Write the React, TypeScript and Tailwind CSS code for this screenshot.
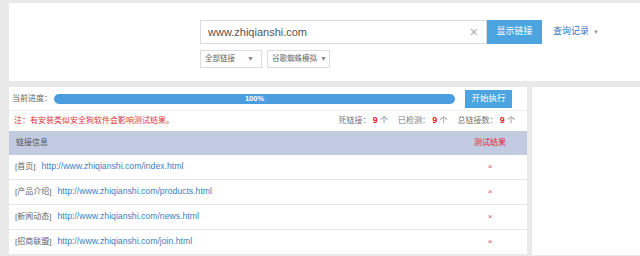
const font = { fontFamily: '"Liberation Sans", "Noto Sans CJK SC", sans-serif' };

const links = [
  { tag: "首页", url: "http://www.zhiqianshi.com/index.html" },
  { tag: "产品介绍", url: "http://www.zhiqianshi.com/products.html" },
  { tag: "新闻动态", url: "http://www.zhiqianshi.com/news.html" },
  { tag: "招商联盟", url: "http://www.zhiqianshi.com/join.html" },
];

function Caret() {
  return <span className="text-[7px] text-[#888]">▼</span>;
}

function SearchBar() {
  return (
    <div className="flex h-[78px] flex-col bg-white pl-[191px] pt-[17px]">
      <div className="flex items-center">
        <div className="flex h-[24px] w-[287px] items-center justify-between border border-[#dcdcdc] pl-[7px] pr-[8px]">
          <span className="text-[11px] text-[#555]">www.zhiqianshi.com</span>
          <span className="text-[14px] font-light leading-none text-[#aaa]">×</span>
        </div>
        <button className="h-[24px] w-[55px] bg-[#4ca5e0] text-[9px] text-white">显示链接</button>
        <span className="ml-[11px] flex items-center gap-[4px] text-[9px] text-[#3b74bb]">
          查询记录 <span className="text-[6px] text-[#999]">▼</span>
        </span>
      </div>
      <div className="mt-[6px] flex gap-[5px]">
        <div className="flex h-[18px] w-[62px] items-center justify-between border border-[#dcdcdc] pl-[4px] pr-[7px] text-[7.5px] text-[#666]">
          全部链接 <Caret />
        </div>
        <div className="flex h-[18px] w-[63px] items-center justify-between border border-[#dcdcdc] pl-[4px] pr-[2px] text-[7.5px] text-[#666]">
          谷歌蜘蛛模拟 <Caret />
        </div>
      </div>
    </div>
  );
}

function Results() {
  return (
    <div className="w-[518px] bg-white">
      <div className="flex h-[24px] items-center border-b border-[#eee] pl-[3px]">
        <span className="w-[42px] shrink-0 text-[8px] text-[#666]">当前进度：</span>
        <div className="flex h-[10px] w-[401px] items-center justify-center rounded-full bg-[#4a9ee0] text-[7.5px] font-bold text-white">
          100%
        </div>
        <button className="ml-[10px] h-[18px] w-[47px] bg-[#4ca5e0] text-[8.5px] text-white">开始执行</button>
      </div>
      <div className="flex h-[20px] items-center justify-between pl-[5px] pr-[12px] text-[8px]">
        <span className="text-[#d8373b]">注：有安装类似安全狗软件会影响测试结果。</span>
        <span className="flex gap-[10px] text-[#777]">
          <span>
            死链接： <b className="text-[9px] text-[#e0262b]">9</b> 个
          </span>
          <span>
            已检测： <b className="text-[9px] text-[#e0262b]">9</b> 个
          </span>
          <span>
            总链接数： <b className="text-[9px] text-[#e0262b]">9</b> 个
          </span>
        </span>
      </div>
      <div className="flex h-[24px] items-center justify-between bg-[#c2cbe1] pl-[7px] pr-[7px] text-[8px]">
        <span className="text-[#555]">链接信息</span>
        <span className="w-[60px] text-center text-[#e0262b]">测试结果</span>
      </div>
      {links.map((l) => (
        <div key={l.url} className="flex h-[25px] items-center justify-between border-b border-[#e6e6e6] pl-[6px] pr-[7px]">
          <span className="flex items-center gap-[6px]">
            <span className="text-[8px] text-[#666]">[{l.tag}]</span>
            <span className="text-[8.7px] text-[#3d7fc0]">{l.url}</span>
          </span>
          <span className="w-[60px] text-center text-[8px] leading-none text-[#d9534f]">×</span>
        </div>
      ))}
    </div>
  );
}

export default function App() {
  return (
    <div className="h-[256px] w-[640px] overflow-hidden bg-[#e9e9e9] pl-[9px] pt-[3px]" style={font}>
      <SearchBar />
      <div className="mt-[6px] flex gap-[5px]">
        <Results />
        <div className="flex-1 bg-white" />
      </div>
    </div>
  );
}
